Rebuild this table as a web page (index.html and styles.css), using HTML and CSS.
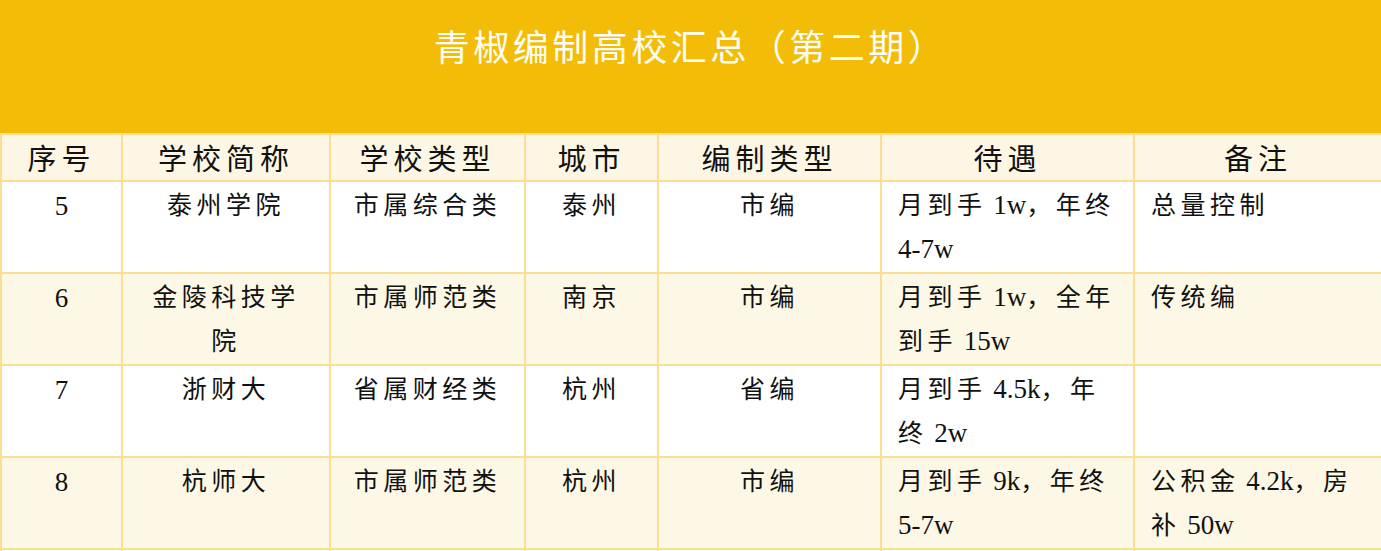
FILE: index.html
```html
<!DOCTYPE html>
<html lang="zh">
<head>
<meta charset="utf-8">
<title>青椒编制高校汇总（第二期）</title>
<link rel="stylesheet" href="styles.css">
</head>
<body>
<div class="page">
  <header class="banner">
    <h1 class="title">青椒编制高校汇总（第二期）</h1>
  </header>
  <table class="sheet">
    <colgroup>
      <col class="c-no"><col class="c-name"><col class="c-type"><col class="c-city"><col class="c-quota"><col class="c-pay"><col class="c-note">
    </colgroup>
    <thead>
      <tr>
        <th>序号</th><th>学校简称</th><th>学校类型</th><th>城市</th><th>编制类型</th><th>待遇</th><th>备注</th>
      </tr>
    </thead>
    <tbody>
      <tr>
        <td class="num">5</td><td class="ctr">泰州学院</td><td class="ctr">市属综合类</td><td class="ctr">泰州</td><td class="ctr">市编</td>
        <td class="left">月到手<span class="lat"> 1w</span>，年终<br><span class="lat">4-7w</span></td><td class="left">总量控制</td>
      </tr>
      <tr>
        <td class="num">6</td><td class="ctr">金陵科技学<br>院</td><td class="ctr">市属师范类</td><td class="ctr">南京</td><td class="ctr">市编</td>
        <td class="left">月到手<span class="lat"> 1w</span>，全年<br>到手<span class="lat"> 15w</span></td><td class="left">传统编</td>
      </tr>
      <tr>
        <td class="num">7</td><td class="ctr">浙财大</td><td class="ctr">省属财经类</td><td class="ctr">杭州</td><td class="ctr">省编</td>
        <td class="left">月到手<span class="lat"> 4.5k</span>，年<br>终<span class="lat"> 2w</span></td><td class="left"></td>
      </tr>
      <tr>
        <td class="num">8</td><td class="ctr">杭师大</td><td class="ctr">市属师范类</td><td class="ctr">杭州</td><td class="ctr">市编</td>
        <td class="left">月到手<span class="lat"> 9k</span>，年终<br><span class="lat">5-7w</span></td><td class="left">公积金<span class="lat"> 4.2k</span>，房<br>补<span class="lat"> 50w</span></td>
      </tr>
      <tr>
        <td class="num">&nbsp;</td><td class="ctr"></td><td class="ctr"></td><td class="ctr"></td><td class="ctr"></td><td class="left"></td><td class="left"></td>
      </tr>
    </tbody>
  </table>
</div>
</body>
</html>
```

FILE: styles.css
```css
html, body {
  margin: 0;
  padding: 0;
  overflow: hidden;
  background: #ffffff;
}

.page {
  width: 1381px;
  font-family: "Liberation Serif", "Noto Sans CJK SC", serif;
  color: #111111;
}

.banner {
  height: 133px;
  background: #f2bc07;
  display: flex;
  justify-content: center;
  align-items: flex-start;
}

.title {
  margin: 0;
  padding-top: 22px;
  font-family: "Noto Sans CJK SC", sans-serif;
  font-weight: 400;
  font-size: 36px;
  line-height: 46px;
  letter-spacing: 3.5px;
  color: #fffdf4;
}

.sheet {
  width: 1381px;
  border-collapse: collapse;
  table-layout: fixed;
}

.c-no { width: 121px; }
.c-name { width: 208px; }
.c-type { width: 195px; }
.c-city { width: 133px; }
.c-quota { width: 223px; }
.c-pay { width: 253px; }
.c-note { width: 248px; }

.sheet th,
.sheet td {
  border: 2px solid #f9de93;
  padding: 0;
  white-space: nowrap;
  overflow: hidden;
}

.sheet th {
  height: 45px;
  background: #fdf6e4;
  font-family: "Noto Sans CJK SC", sans-serif;
  font-weight: 400;
  font-size: 29px;
  letter-spacing: 5px;
  line-height: 45px;
  text-align: center;
  vertical-align: middle;
}

.sheet td {
  height: 87px;
  padding-top: 2px;
  font-size: 25px;
  line-height: 44px;
  letter-spacing: 4.5px;
  vertical-align: top;
}

.sheet td .lat {
  font-size: 27px;
  line-height: 1;
  letter-spacing: 0;
}

.sheet tbody tr:nth-child(odd) td { background: #ffffff; }
.sheet tbody tr:nth-child(even) td { background: #fdf7e6; }

.sheet td.num {
  text-align: center;
  font-size: 27px;
  letter-spacing: 0;
}

.sheet td.ctr {
  text-align: center;
}

.sheet td.left {
  text-align: left;
  padding-left: 16px;
}
```
